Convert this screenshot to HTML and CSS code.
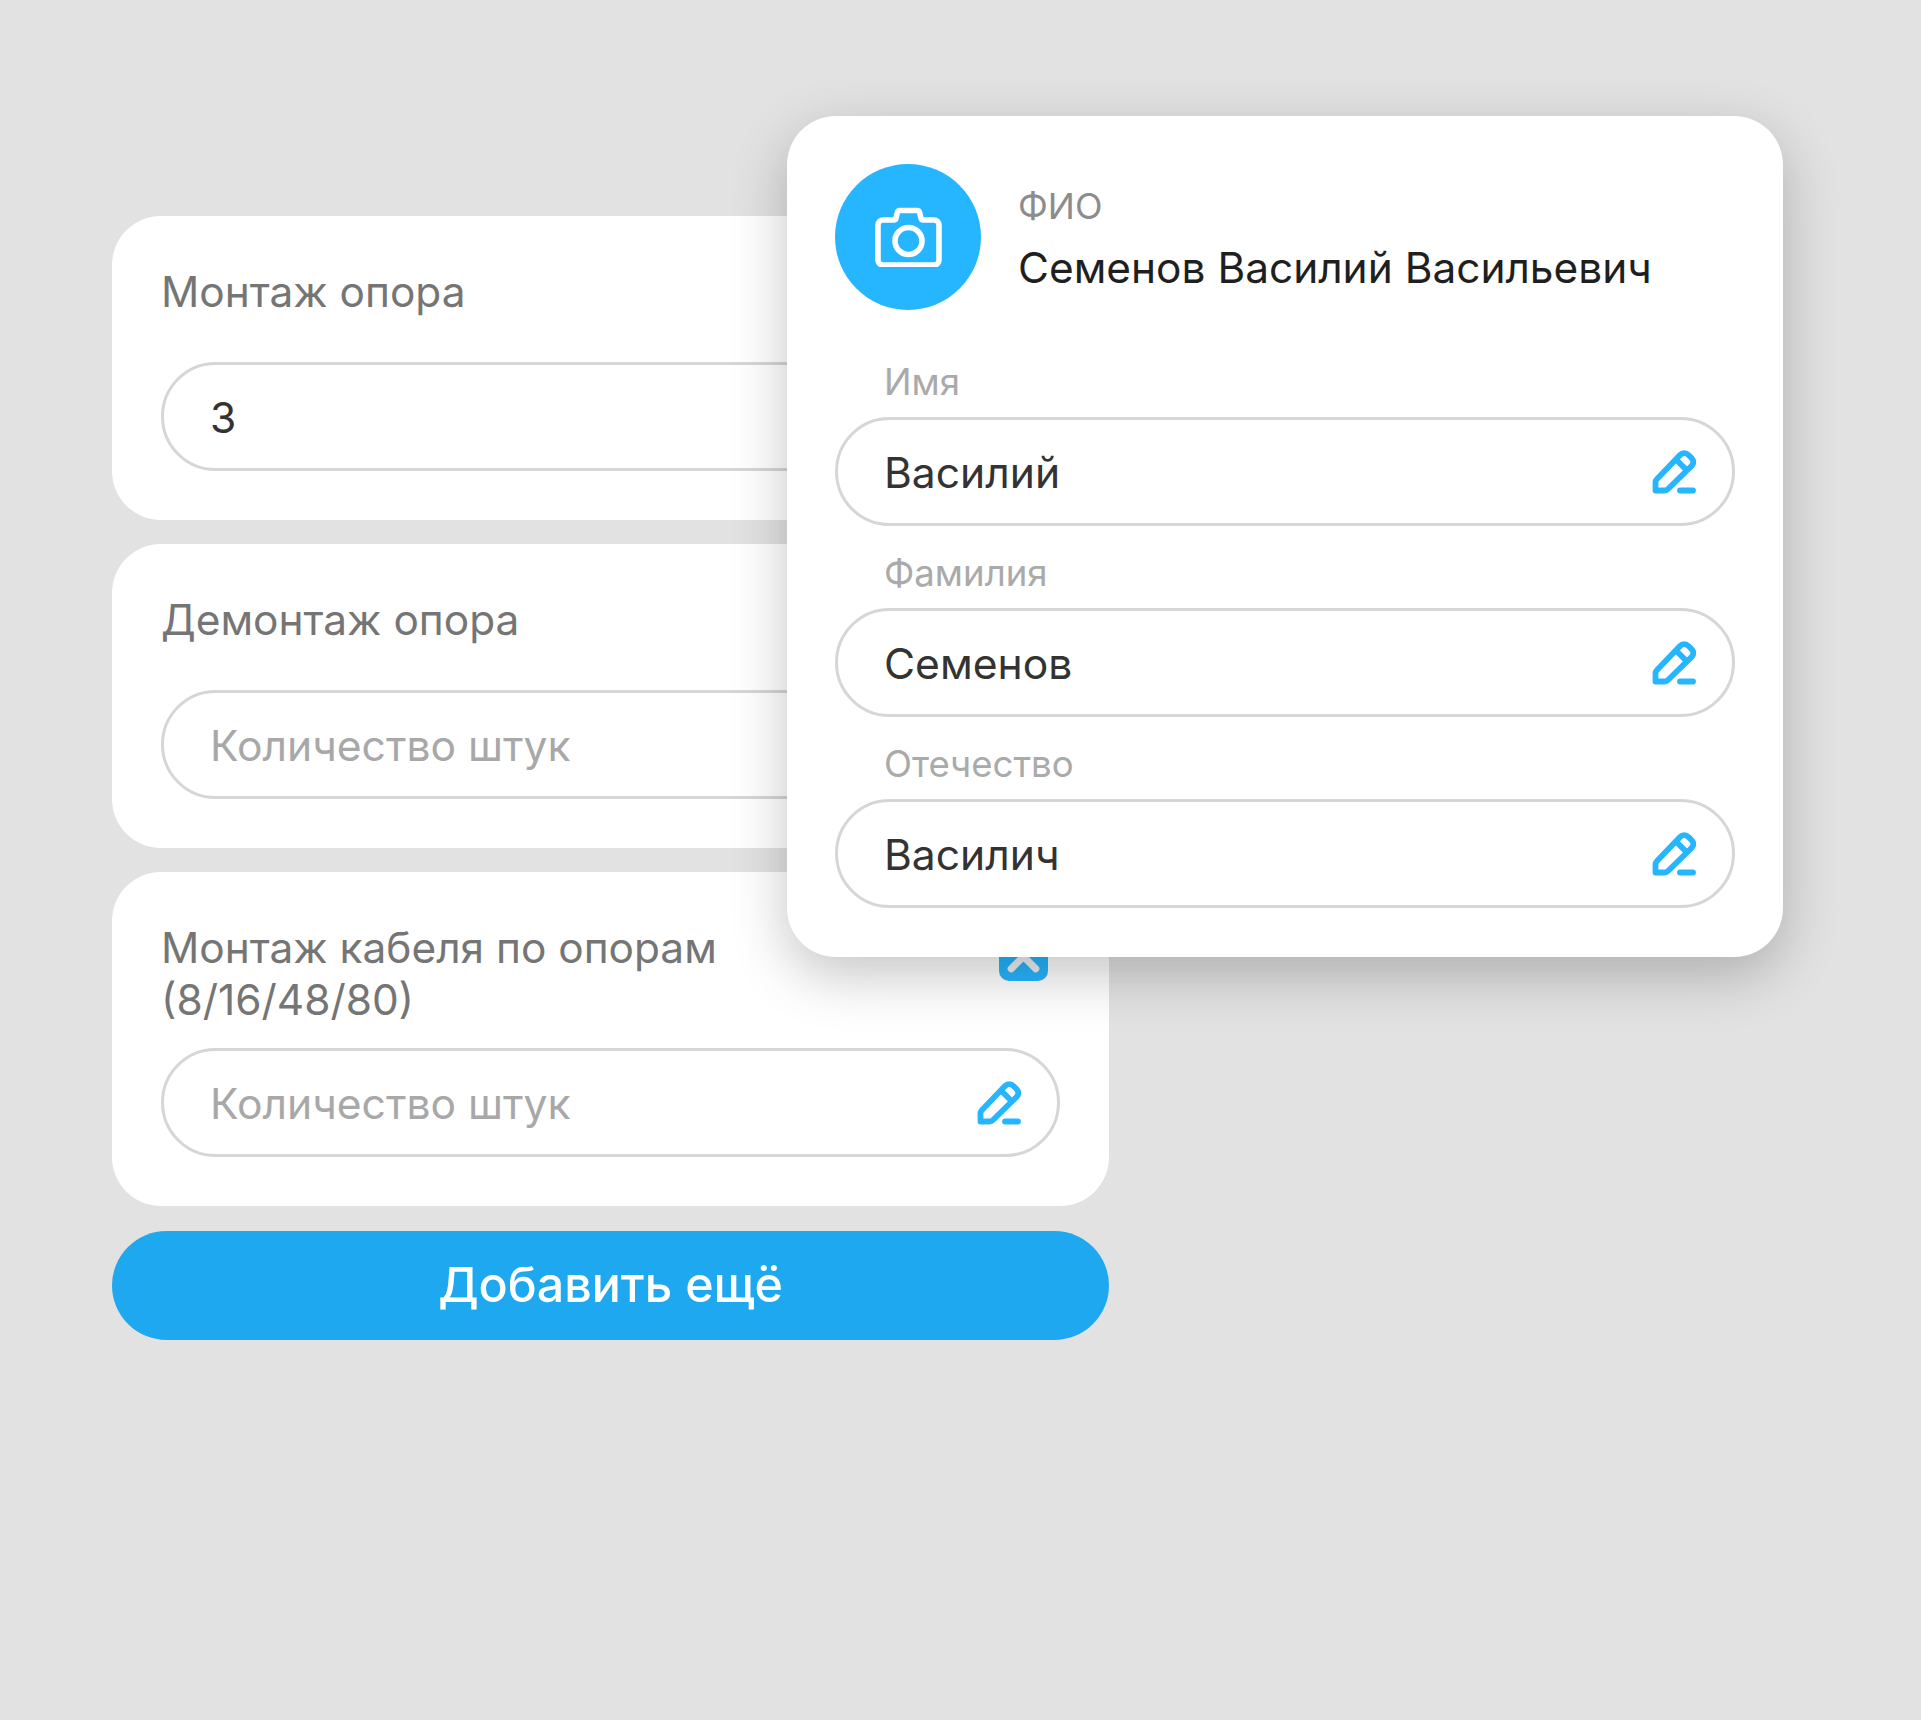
FILE: index.html
```html
<!DOCTYPE html>
<html lang="ru">
<head>
    <meta charset="UTF-8">
    <title>Монтаж</title>
    <link rel="stylesheet" href="styles.css">
</head>
<body>
    <svg class="sprites" width="0" height="0">
        <symbol id="pencil" viewBox="0 0 44 44">
            <path d="M3.5 40.5V32.5C3.5 31 4 30 5 29L28 5C30.5 2.5 34 2.5 36.5 5L39.5 8C42 10.5 42 13.5 39.5 16L16 39C15 40 14 40.5 12.5 40.5Z" fill="none" stroke="currentColor" stroke-width="5.8" stroke-linejoin="round"/>
            <path d="M24 9.5L34.5 20" fill="none" stroke="currentColor" stroke-width="5.8"/>
            <path d="M28 40.5H41" fill="none" stroke="currentColor" stroke-width="5.8" stroke-linecap="round"/>
        </symbol>
    </svg>

    <div class="page">
        <div class="column">
            <section class="card">
                <div class="card-head">
                    <h2 class="card-title">Монтаж опора</h2>
                    <button class="close-btn"><svg viewBox="0 0 24 24"><path d="M6 6L18 18M18 6L6 18"/></svg></button>
                </div>
                <div class="field-box">
                    <span class="value">3</span>
                    <svg class="pencil"><use href="#pencil"/></svg>
                </div>
            </section>

            <section class="card">
                <div class="card-head">
                    <h2 class="card-title">Демонтаж опора</h2>
                    <button class="close-btn"><svg viewBox="0 0 24 24"><path d="M6 6L18 18M18 6L6 18"/></svg></button>
                </div>
                <div class="field-box">
                    <span class="placeholder">Количество штук</span>
                    <svg class="pencil"><use href="#pencil"/></svg>
                </div>
            </section>

            <section class="card">
                <div class="card-head">
                    <h2 class="card-title">Монтаж кабеля по опорам<br>(8/16/48/80)</h2>
                    <button class="close-btn"><svg viewBox="0 0 24 24"><path d="M6 6L18 18M18 6L6 18"/></svg></button>
                </div>
                <div class="field-box">
                    <span class="placeholder">Количество штук</span>
                    <svg class="pencil"><use href="#pencil"/></svg>
                </div>
            </section>

            <button class="add-btn">Добавить ещё</button>
        </div>

        <section class="popup">
            <div class="profile">
                <div class="avatar">
                    <svg class="camera" viewBox="0 0 67 60">
                        <path d="M8 13H19C20 13 20.6 12.5 20.9 11.6L22.4 5.4C22.7 4.2 23.4 3.5 24.6 3.5H42.4C43.6 3.5 44.3 4.2 44.6 5.4L46.1 11.6C46.4 12.5 47 13 48 13H59C62 13 64 15 64 18V53C64 56 62 58 59 58H8C5 58 3 56 3 53V18C3 15 5 13 8 13Z"/>
                        <circle cx="33.5" cy="34" r="13.5"/>
                    </svg>
                </div>
                <div class="profile-info">
                    <div class="profile-label">ФИО</div>
                    <div class="profile-name">Семенов Василий Васильевич</div>
                </div>
            </div>

            <div class="form-group">
                <label>Имя</label>
                <div class="field-box">
                    <span class="value">Василий</span>
                    <svg class="pencil"><use href="#pencil"/></svg>
                </div>
            </div>
            <div class="form-group">
                <label>Фамилия</label>
                <div class="field-box">
                    <span class="value">Семенов</span>
                    <svg class="pencil"><use href="#pencil"/></svg>
                </div>
            </div>
            <div class="form-group">
                <label>Отечество</label>
                <div class="field-box">
                    <span class="value">Василич</span>
                    <svg class="pencil"><use href="#pencil"/></svg>
                </div>
            </div>
        </section>
    </div>
</body>
</html>
```

FILE: styles.css
```css
* { box-sizing: border-box; margin: 0; padding: 0; font-family: Inter, 'Liberation Sans', sans-serif; }
body { background: #e2e2e2; height: 1720px; overflow: hidden; }
.sprites { position: absolute; }
.page { position: relative; padding: 216px 0 0 112px; }
.column { width: 997px; display: flex; flex-direction: column; gap: 24px; }

.card { background: white; border-radius: 49px; padding: 49px; }
.card-head { display: flex; justify-content: space-between; align-items: flex-start; min-height: 75px; margin-bottom: 22px; }
.card-title { font-size: 42.4px; line-height: 52px; font-weight: 400; color: #757575; padding-top: 1px; }
.close-btn { width: 49px; height: 49px; margin: 11px 12px 0 0; background: #26b5ff; border: none; border-radius: 10px; flex: none; }
.close-btn svg { display: block; fill: none; stroke: #f0f0f0; stroke-width: 3.5; stroke-linecap: round; width: 100%; height: 100%; }

.field-box { height: 109px; border: 3px solid #d6d6d6; border-radius: 55px; padding: 0 36px 0 46px; display: flex; align-items: center; justify-content: space-between; background: white; }
.value { font-size: 42.6px; color: #333; padding-top: 2px; }
.placeholder { font-size: 42.6px; color: #a8a8a8; padding-top: 2px; }
.pencil { width: 44px; height: 44px; color: #26b5ff; flex: none; }

.add-btn { height: 109px; margin-top: 1px; background: #1da8f0; color: white; border: none; border-radius: 55px; font-size: 48.4px; font-weight: 500; padding-bottom: 2px; }

.popup { position: absolute; top: 116px; left: 787px; width: 996px; height: 841px; background: white; border-radius: 49px; padding: 48px; box-shadow: 0 18px 56px rgba(0, 0, 0, 0.23); }
.profile { display: flex; align-items: center; gap: 37px; margin-bottom: 25px; }
.profile-info { padding-top: 7px; }
.avatar { width: 146px; height: 146px; border-radius: 50%; background: #26b5ff; flex: none; display: flex; align-items: center; justify-content: center; }
.camera { width: 67px; height: 60px; fill: none; stroke: white; stroke-width: 5.6; }
.profile-label { font-size: 36px; line-height: 42px; color: #8c8c8c; }
.profile-name { font-size: 42.4px; line-height: 56px; color: #1f1f1f; margin-top: 13px; }

.form-group label { display: block; height: 82px; padding: 25px 0 0 49px; font-size: 36.6px; line-height: 44px; color: #aaa; }
```
